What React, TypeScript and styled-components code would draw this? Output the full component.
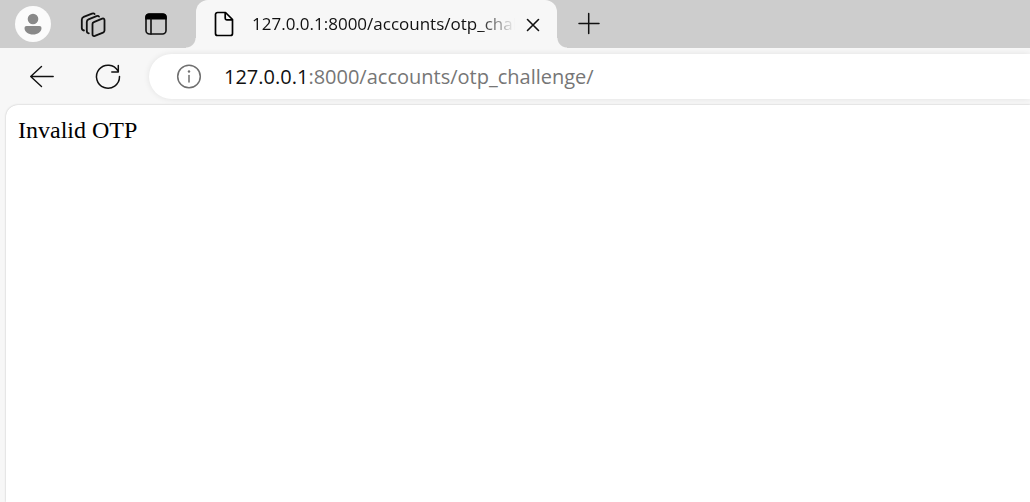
import React from "react";
import styled, { createGlobalStyle } from "styled-components";

const GlobalStyle = createGlobalStyle`
  * { box-sizing: border-box; }
  body { margin: 0; background: #f7f7f7; }
`;

const uiFont = `"Open Sans", "Noto Sans", sans-serif`;

const Window = styled.div`
  display: flex;
  flex-direction: column;
  min-height: 100vh;
  overflow: hidden;
  background: #f7f7f7;
  font-family: ${uiFont};
`;

const TabStrip = styled.header`
  display: flex;
  align-items: center;
  height: 48px;
  padding-left: 15px;
  background: #cdcdcd;
`;

const IconButton = styled.button<{ $size: number }>`
  display: flex;
  flex: none;
  align-items: center;
  justify-content: center;
  width: ${(p) => p.$size}px;
  height: ${(p) => p.$size}px;
  padding: 0;
  border: 0;
  background: none;
  color: #111;
`;

const ProfileButton = styled(IconButton)`
  border-radius: 50%;
  background: #fbfbfb;
`;

const StripTools = styled.div`
  display: flex;
  align-items: center;
  gap: 30px;
  margin: 0 22px 0 27px;
`;

const Tab = styled.div`
  position: relative;
  display: flex;
  flex: none;
  align-items: center;
  width: 361px;
  height: 48px;
  padding: 0 6px 0 18px;
  border-radius: 12px 12px 0 0;
  background: #f7f7f7;

  &::before,
  &::after {
    content: "";
    position: absolute;
    bottom: 0;
    width: 10px;
    height: 10px;
  }
  &::before {
    right: 100%;
    background: radial-gradient(circle at 0 0, #cdcdcd 9px, #f7f7f7 10px);
  }
  &::after {
    left: 100%;
    background: radial-gradient(circle at 100% 0, #cdcdcd 9px, #f7f7f7 10px);
  }
`;

const TabTitle = styled.span`
  flex: 1;
  margin-left: 18px;
  overflow: hidden;
  white-space: nowrap;
  font-size: 17px;
  line-height: 24px;
  color: #111;
  mask-image: linear-gradient(to right, #000 calc(100% - 36px), transparent);
`;

const NewTabButton = styled(IconButton)`
  margin-left: 16px;
`;

const Toolbar = styled.nav`
  display: flex;
  align-items: center;
  height: 57px;
  padding: 5px 0 5px 26px;
`;

const NavButtons = styled.div`
  display: flex;
  gap: 34px;
  margin-right: 25px;
`;

const AddressBar = styled.label`
  display: flex;
  flex: 1;
  align-items: center;
  height: 45px;
  padding-left: 24px;
  border-radius: 23px 0 0 23px;
  background: #fff;
  box-shadow: 0 0 6px rgba(0, 0, 0, 0.09);
  font-size: 20px;
  line-height: 28px;
`;

const Host = styled.span`
  margin-left: 19px;
  color: #111;
`;

const PathInput = styled.input`
  flex: 1;
  min-width: 0;
  padding: 0;
  border: 0;
  outline: 0;
  background: none;
  font: inherit;
  color: #767676;
`;

const Page = styled.main`
  flex: 1;
  margin-left: 6px;
  padding: 12px;
  border-radius: 12px 0 0 0;
  background: #fff;
  box-shadow: 0 0 2px rgba(0, 0, 0, 0.25);
  font-family: "Liberation Serif", "Times New Roman", serif;
  font-size: 24px;
  line-height: 27px;
  color: #000;
`;

const Icon = styled.svg<{ $stroke?: number }>`
  display: block;
  flex: none;
  fill: none;
  stroke: currentColor;
  stroke-width: ${(p) => p.$stroke ?? 1.6};
  stroke-linecap: round;
  stroke-linejoin: round;
`;

export default function App() {
  return (
    <Window>
      <GlobalStyle />
      <TabStrip>
        <ProfileButton $size={36} aria-label="Profile">
          <Icon width="36" height="36" viewBox="0 0 36 36">
            <g fill="#898989" stroke="none">
              <circle cx="18" cy="13" r="5.3" />
              <path d="M11.500 20h13a2 2 0 0 1 2 2c0 4-3.900 6.500-8.500 6.500s-8.500-2.500-8.500-6.500a2 2 0 0 1 2-2z" />
            </g>
          </Icon>
        </ProfileButton>
        <StripTools>
          <IconButton $size={30} aria-label="Workspaces">
            <Icon width="30" height="30" viewBox="0 0 30 30" $stroke={1.8}>
              <path d="M15.800 13.200L24.200 9.700Q26.500 8.900 26.500 11.300V21.500Q26.500 23 25 23.700L16.900 26.900Q14.500 27.600 14.500 25.300V15Q14.500 13.700 15.800 13.200z" />
              <path d="M10.800 24.300Q8.800 24 8.800 22V13Q8.800 11 10.500 10.300L18.500 7.100Q20.300 6.400 21 7.600" />
              <path d="M6 21.500Q3.800 21.200 3.800 19V10.800Q3.800 8.700 5.700 7.900L14 4.600Q15.800 3.900 16.600 5.100" />
            </Icon>
          </IconButton>
          <IconButton $size={36} aria-label="Tab actions menu">
            <Icon width="36" height="36" viewBox="0 0 36 36">
              <rect x="8" y="8" width="20" height="20" rx="3.500" />
              <path d="M7.200 13.500V11a3.500 3.500 0 0 1 3.500-3.500h14.600a3.500 3.500 0 0 1 3.500 3.500v2.500z" fill="#000" stroke="none" />
              <path d="M13 13v15" />
            </Icon>
          </IconButton>
        </StripTools>
        <Tab>
          <Icon width="20" height="26" viewBox="0 0 20 26" $stroke={1.7}>
            <path d="M3.500 1.500H11.500L18.500 8.500V22.500a2 2 0 0 1-2 2H3.500a2 2 0 0 1-2-2V3.500a2 2 0 0 1 2-2z" />
            <path d="M11.200 2v5.300a1.500 1.500 0 0 0 1.500 1.500h5.300" />
          </Icon>
          <TabTitle>127.0.0.1:8000/accounts/otp_challenge/</TabTitle>
          <IconButton $size={36} aria-label="Close tab">
            <Icon width="36" height="36" viewBox="0 0 36 36">
              <path d="M12.500 13.500L23.500 24.500M23.500 13.500L12.500 24.500" />
            </Icon>
          </IconButton>
        </Tab>
        <NewTabButton $size={32} aria-label="New tab">
          <Icon width="32" height="32" viewBox="0 0 32 32" $stroke={1.5}>
            <path d="M6 15.500h20M15.700 5.500v20" />
          </Icon>
        </NewTabButton>
      </TabStrip>
      <Toolbar>
        <NavButtons>
          <IconButton $size={32} aria-label="Back">
            <Icon width="32" height="32" viewBox="0 0 32 32" $stroke={1.4}>
              <path d="M27.200 15.500H4.700M15.500 5.500L4.700 15.500L15.500 25.500" />
            </Icon>
          </IconButton>
          <IconButton $size={32} aria-label="Refresh">
            <Icon width="32" height="32" viewBox="0 0 32 32" $stroke={1.5}>
              <path d="M26 10A11.500 11.500 0 1 0 27.500 15.500M26.300 4.500v6.500h-6.500" />
            </Icon>
          </IconButton>
        </NavButtons>
        <AddressBar>
          <Icon width="32" height="32" viewBox="0 0 32 32" color="#6f6f6f" $stroke={1.5}>
            <circle cx="16" cy="15.500" r="11.300" />
            <path d="M16 14.500v6.500" />
            <circle cx="16" cy="10.500" r="1.200" fill="currentColor" stroke="none" />
          </Icon>
          <Host>127.0.0.1</Host>
          <PathInput aria-label="Address" defaultValue=":8000/accounts/otp_challenge/" />
        </AddressBar>
      </Toolbar>
      <Page>Invalid OTP</Page>
    </Window>
  );
}
